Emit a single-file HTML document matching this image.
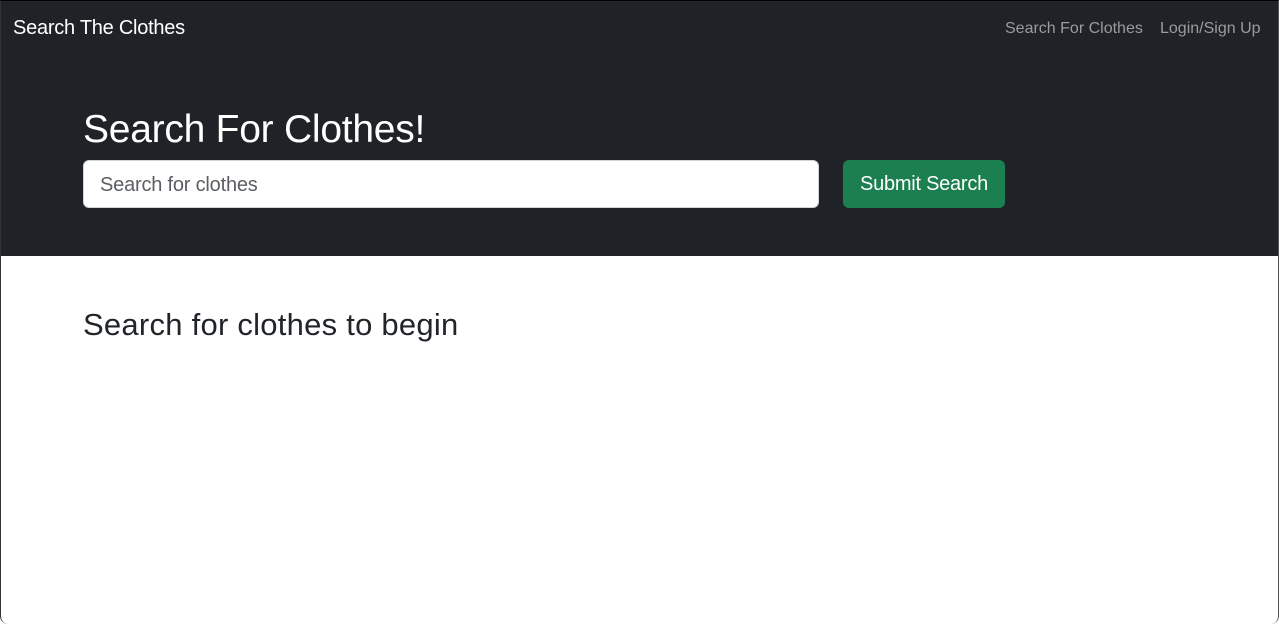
<!DOCTYPE html>
<html><head><style>
html,body{margin:0;padding:0;}
body{width:1279px;height:624px;overflow:hidden;background:#fff;font-family:"Liberation Sans",Arial,sans-serif;position:relative;}
.frame{position:absolute;inset:0;border-top:1px solid #000;border-left:1px solid #333;border-right:1px solid #555;border-radius:0 0 8px 8px;box-sizing:border-box;pointer-events:none;}
.dark{position:absolute;left:0;top:0;width:1279px;height:256px;background:#1f2226;}
.t{position:absolute;white-space:nowrap;}
.brand{left:13px;top:17px;font-size:20px;color:#fff;letter-spacing:-0.25px;}
.nl{top:20px;font-size:16px;color:#9a9c9e;letter-spacing:0;}
h1{position:absolute;left:83px;top:107px;margin:0;font-size:39px;font-weight:500;color:#fff;letter-spacing:-0.25px;line-height:1.2;}
.inp{position:absolute;left:83px;top:160px;width:736px;height:48px;background:#fff;border:1px solid #ced4da;border-radius:6px;box-sizing:border-box;}
.inp span{position:absolute;left:16px;top:13px;font-size:20px;color:#5b5f63;letter-spacing:-0.2px;}
.btn{position:absolute;left:843px;top:160px;width:162px;height:48px;background:#1b7f4f;border-radius:6px;color:#fff;font-size:20px;text-align:center;line-height:49px;letter-spacing:-0.25px;}
h2{position:absolute;left:83px;top:306px;margin:0;font-size:31px;font-weight:500;color:#212529;letter-spacing:0.25px;line-height:1.2;}
</style></head><body>
<div class="dark"></div>
<div class="t brand">Search The Clothes</div>
<div class="t nl" style="left:1005px">Search For Clothes</div>
<div class="t nl" style="left:1160px">Login/Sign Up</div>
<h1>Search For Clothes!</h1>
<div class="inp"><span>Search for clothes</span></div>
<div class="btn">Submit Search</div>
<h2>Search for clothes to begin</h2>
<div class="frame"></div>
</body></html>
